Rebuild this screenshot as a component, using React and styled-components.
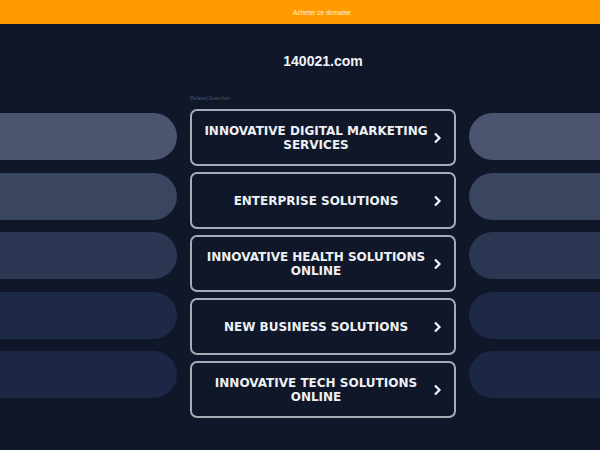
import styled, { createGlobalStyle } from "styled-components";

const GlobalStyle = createGlobalStyle`
  html, body {
    margin: 0;
    padding: 0;
    background: #0f1729;
  }
  body {
    font-family: "DejaVu Sans", Verdana, sans-serif;
    overflow: hidden;
  }
`;

const Main = styled.div`
  width: 600px;
  height: 450px;
  background-color: #0f1729;
  overflow: hidden;
`;

const TopBar = styled.div`
  height: 24px;
  background-color: #ff9a00;
  display: flex;
  align-items: center;
  justify-content: center;
  padding-left: 44px;
  font-family: "Liberation Sans", Arial, sans-serif;
  font-size: 6.5px;
  color: #fff3dc;
`;

const Row = styled.div`
  display: flex;
  align-items: flex-start;
  gap: 13px;
`;

const Side = styled.div`
  width: ${(p) => p.$width}px;
  flex: none;
  padding-top: 89px;
  display: flex;
  flex-direction: column;
  gap: 12.5px;
`;

const Pill = styled.div`
  height: 47px;
  background-color: ${(p) => p.$color};
  border-radius: ${(p) => (p.$right ? "24px 0 0 24px" : "0 24px 24px 0")};
`;

const Center = styled.div`
  width: 266px;
  flex: none;
  padding-top: 28px;
  display: flex;
  flex-direction: column;
`;

const Title = styled.h1`
  margin: 0;
  height: 18px;
  line-height: 18px;
  font-family: "Liberation Sans", Arial, sans-serif;
  font-size: 14px;
  font-weight: 700;
  color: #f1f3f7;
  text-align: center;
`;

const Related = styled.div`
  margin-top: 24px;
  margin-bottom: 7px;
  height: 8px;
  font-family: "Liberation Sans", Arial, sans-serif;
  font-size: 5px;
  line-height: 8px;
  color: #4d566c;
`;

const List = styled.div`
  display: flex;
  flex-direction: column;
  gap: 6px;
`;

const Link = styled.a`
  box-sizing: border-box;
  height: 57px;
  border: 2px solid #a7abb4;
  border-radius: 7px;
  display: flex;
  align-items: center;
  padding: 0 12px 0 10px;
  text-decoration: none;
  color: #eef0f4;
`;

const Label = styled.span`
  flex: 1;
  text-align: center;
  font-family: "DejaVu Sans", Verdana, sans-serif;
  font-size: 12px;
  font-weight: 700;
  line-height: 14px;
  text-transform: uppercase;
`;

const Chevron = () => (
  <svg width="10" height="12" viewBox="0 0 10 12" style={{ flex: "none", marginLeft: 2 }}>
    <path d="M3 1.5 L7.5 6 L3 10.5" fill="none" stroke="#f1f3f7" strokeWidth="2.2" />
  </svg>
);

const links = [
  "Innovative Digital Marketing Services",
  "Enterprise Solutions",
  "Innovative Health Solutions Online",
  "New Business Solutions",
  "Innovative Tech Solutions Online",
];

const pills = ["#4b5570", "#3a4560", "#2b3753", "#1d2946", "#1b2745"];

export default function App() {
  return (
    <Main>
      <GlobalStyle />
      <TopBar>Acheter ce domaine</TopBar>
      <Row>
        <Side $width={177}>
          {pills.map((c, i) => (
            <Pill key={i} $color={c} />
          ))}
        </Side>
        <Center>
          <Title>140021.com</Title>
          <Related>Related Searches</Related>
          <List>
            {links.map((t) => (
              <Link href="#" key={t}>
                <Label>{t}</Label>
                <Chevron />
              </Link>
            ))}
          </List>
        </Center>
        <Side $width={160}>
          {pills.map((c, i) => (
            <Pill key={i} $color={c} $right />
          ))}
        </Side>
      </Row>
    </Main>
  );
}
